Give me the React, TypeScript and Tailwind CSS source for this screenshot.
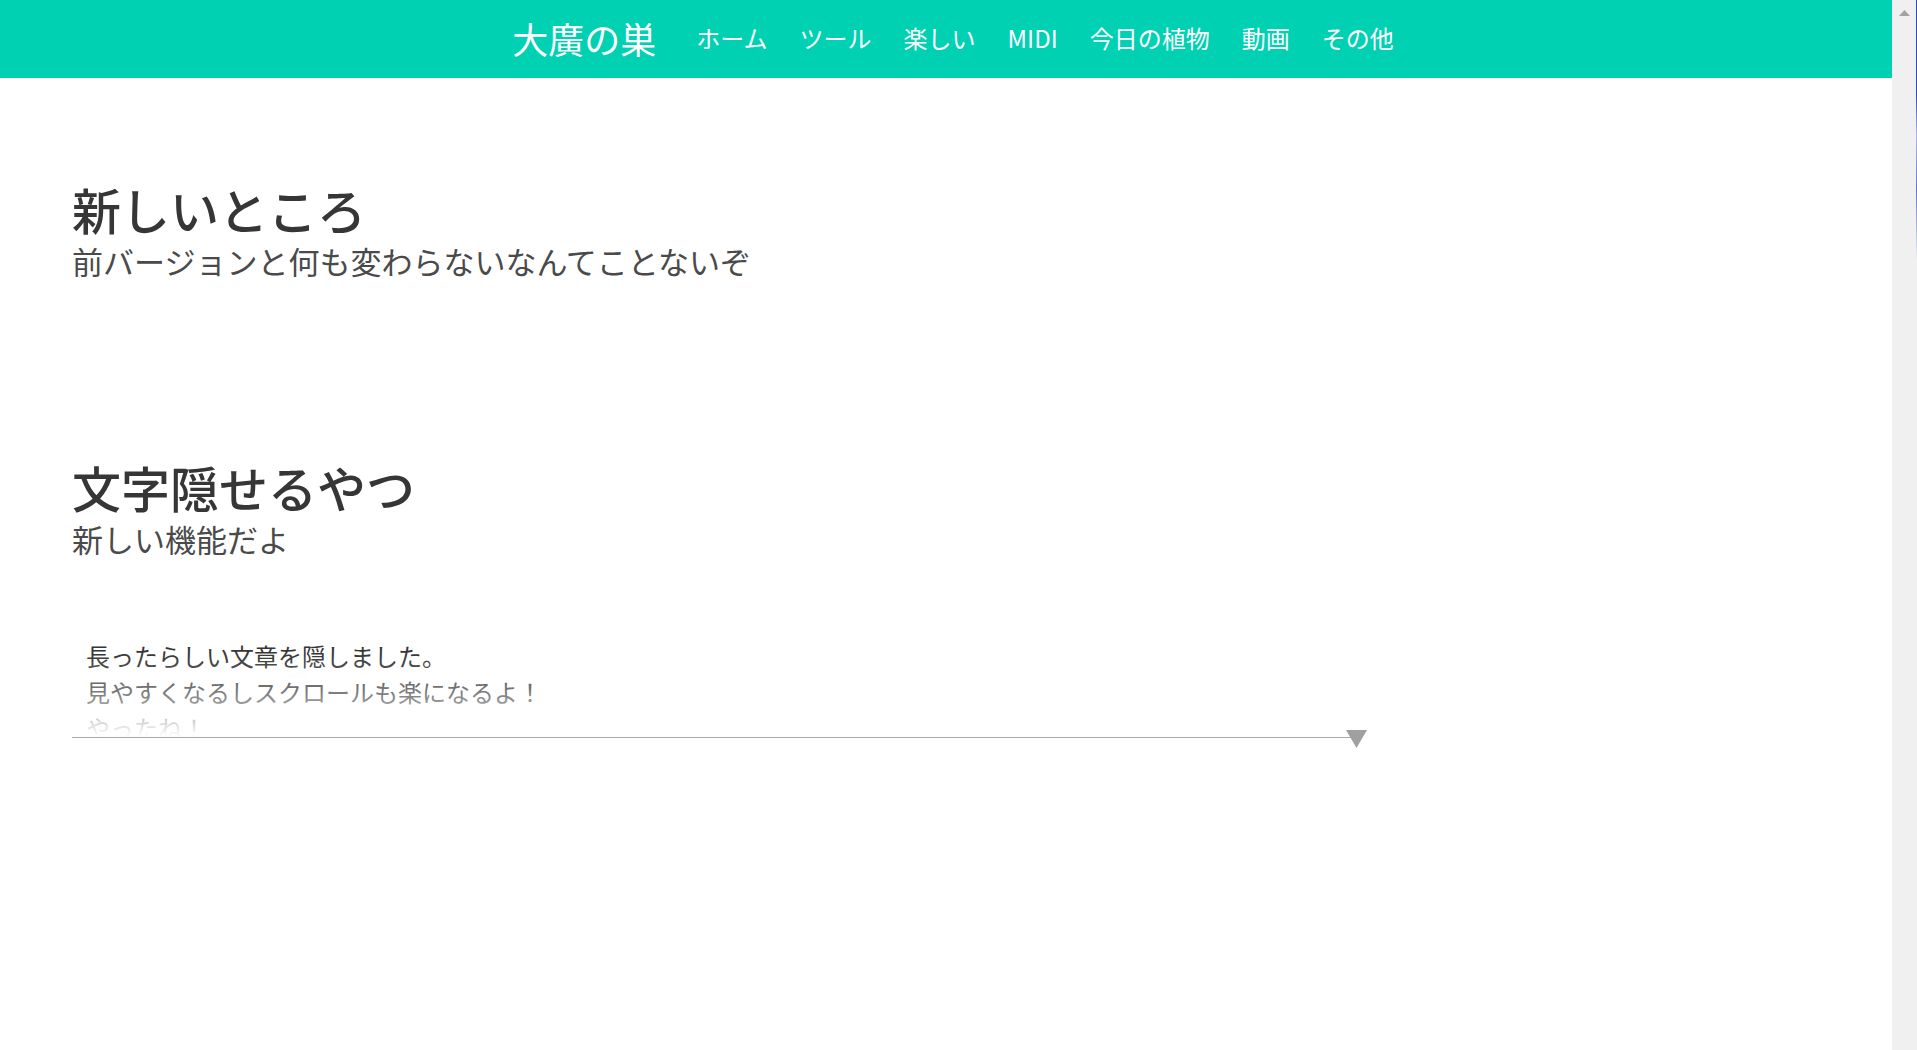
import React from "react";

const navItems = ["ホーム", "ツール", "楽しい", "MIDI", "今日の植物", "動画", "その他"];

const jp = "font-['Noto_Sans_CJK_JP','Noto_Sans',sans-serif]";

function Header() {
  return (
    <header className="h-[78px] bg-[#00d1b2] flex items-center justify-center pl-[14px] pb-[2px]">
      <a className="text-white text-[36px] leading-none mr-[40px]">大廣の巣</a>
      <nav className="flex items-center gap-[32px]">
        {navItems.map((item) => (
          <a key={item} className="text-white text-[24px] leading-none">
            {item}
          </a>
        ))}
      </nav>
    </header>
  );
}

function Section({ title, subtitle }: { title: string; subtitle: string }) {
  return (
    <section>
      <h1 className="text-[49px] leading-[54px] font-medium text-[#363636]">{title}</h1>
      <h2 className="mt-[5px] text-[31px] leading-[39px] text-[#4a4a4a]">{subtitle}</h2>
    </section>
  );
}

function CollapsedText() {
  return (
    <div className="relative mt-[77px] w-[1284px]">
      <div className="relative h-[103px] overflow-hidden border-b border-[#a8a8a8] pt-[3px] pl-[14px] text-[24px] leading-[36px] text-[#363636]">
        <p>長ったらしい文章を隠しました。</p>
        <p>見やすくなるしスクロールも楽になるよ！</p>
        <p>やったね！</p>
        <div className="absolute inset-0 bg-[linear-gradient(to_bottom,rgba(255,255,255,0)_18%,rgba(255,255,255,0.34)_56%,rgba(255,255,255,0.86)_90%,#ffffff_100%)]" />
      </div>
      <svg
        className="absolute right-[-11px] bottom-[-10px]"
        width="21"
        height="18"
        viewBox="0 0 21 18"
      >
        <polygon points="0,0 21,0 10.5,18" fill="#a0a0a0" />
      </svg>
    </div>
  );
}

function Scrollbar() {
  return (
    <div className="relative w-[25px] h-full bg-[#f0f0f0] shrink-0">
      <svg className="absolute left-[7px] top-[10px]" width="11" height="6" viewBox="0 0 11 6">
        <polygon points="5.5,0 11,6 0,6" fill="#a3a3a3" />
      </svg>
      <div className="absolute right-0 top-0 w-px h-[260px] bg-[linear-gradient(to_bottom,#2a4fa8_0px,#2a4fa8_95px,#a8bce8_135px,#5a78c8_190px,#f0f0f0_260px)]" />
    </div>
  );
}

export default function App() {
  return (
    <div className={`flex w-full h-[1050px] overflow-hidden bg-white ${jp}`}>
      <div className="flex-1 min-w-0">
        <Header />
        <main className="px-[72px] pt-[104px]">
          <Section title="新しいところ" subtitle="前バージョンと何も変わらないなんてことないぞ" />
          <div className="mt-[180px]">
            <Section title="文字隠せるやつ" subtitle="新しい機能だよ" />
          </div>
          <CollapsedText />
        </main>
      </div>
      <Scrollbar />
    </div>
  );
}
